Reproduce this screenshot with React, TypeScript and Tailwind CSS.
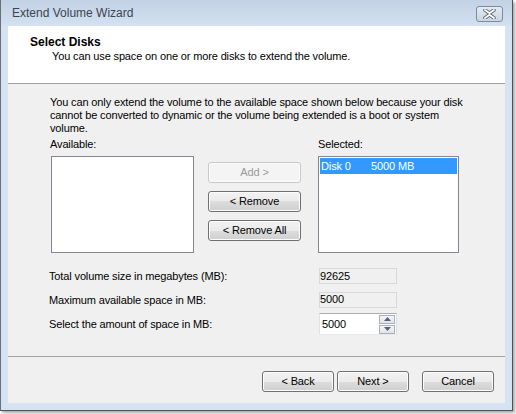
import * as React from "react";

const font = { fontFamily: '"Liberation Sans", Arial, sans-serif' };

// Vista-style push button
const WinButton: React.FC<{ label: string; disabled?: boolean; className?: string }> = ({
  label,
  disabled,
  className = "",
}) => (
  <button
    type="button"
    disabled={disabled}
    className={
      "h-[21px] rounded-[3px] border text-[11px] leading-none tracking-[-0.12px] shadow-[inset_0_0_0_1px_#fcfcfc] " +
      (disabled
        ? "border-[#c5c9cc] bg-[#f4f4f4] text-[#9a9a9a] "
        : "border-[#707070] bg-[linear-gradient(#f2f2f2_0%,#ebebeb_50%,#dddddd_50%,#cfcfcf_100%)] text-black ") +
      className
    }
  >
    {label}
  </button>
);

const ReadOnlyBox: React.FC<{ value: string }> = ({ value }) => (
  <div className="flex h-[16px] w-[78px] items-center border border-[#d9d9d9] bg-[#f0f0f0] text-[11px] leading-none text-black">
    {value}
  </div>
);

const Spinner: React.FC<{ value: string }> = ({ value }) => (
  <div className="flex h-[22px] w-[78px] items-center justify-between border border-[#abadb3] border-b-[#e3e9ef] border-l-[#e2e3ea] border-r-[#dbdfe6] bg-white pl-[2px] pr-[1px]">
    <span className="text-[11px] leading-none text-black">{value}</span>
    <div className="flex flex-col gap-[1px]">
      <div className="flex h-[9px] w-[16px] items-center justify-center border border-[#a9b0b8] bg-[linear-gradient(#f6f6f6,#e3e3e3)]">
        <svg width="7" height="4" viewBox="0 0 7 4">
          <path d="M0 4 L3.5 0 L7 4 Z" fill="#4d6185" />
        </svg>
      </div>
      <div className="flex h-[9px] w-[16px] items-center justify-center border border-[#a9b0b8] bg-[linear-gradient(#f6f6f6,#e3e3e3)]">
        <svg width="7" height="4" viewBox="0 0 7 4">
          <path d="M0 0 L7 0 L3.5 4 Z" fill="#4d6185" />
        </svg>
      </div>
    </div>
  </div>
);

export default function App() {
  return (
    <div className="h-[414px] w-[516px] bg-white" style={font}>
      <div className="flex h-[411px] w-[513px] flex-col border-x border-b border-[#4e5258] border-l-[#6b7078] bg-[#d5e3f3] shadow-[2px_2px_3px_rgba(0,0,0,0.35)]">
        {/* title bar */}
        <div className="flex h-[26px] shrink-0 items-center justify-between bg-[linear-gradient(#c2d2e4,#d3e1f1)] pl-[11px] pr-[9px]">
          <span className="text-[12px] text-[#3d4450]">Extend Volume Wizard</span>
          <div className="mt-[2px] flex h-[16px] w-[27px] items-center justify-center rounded-[3px] border border-[#7d8a99] bg-[linear-gradient(#e4ebf3,#c9d5e2)]">
            <svg width="13" height="10" viewBox="0 0 13 10">
              <path
                d="M2 1 L6.5 4.2 L11 1 M2 9 L6.5 5.8 L11 9"
                stroke="#5f6773"
                strokeWidth="3.6"
                strokeLinecap="round"
                fill="none"
              />
              <path
                d="M2 1 L6.5 4.2 L11 1 M2 9 L6.5 5.8 L11 9"
                stroke="#ffffff"
                strokeWidth="1.8"
                strokeLinecap="round"
                fill="none"
              />
            </svg>
          </div>
        </div>

        {/* client area */}
        <div className="mx-[7px] flex h-[377px] shrink-0 flex-col bg-[#f0f0f0] text-black">
          <div className="h-[58px] shrink-0 border-b border-[#a0a0a0] bg-white pl-[22px] pt-[9px]">
            <div className="text-[12px] font-bold leading-[14px]">Select Disks</div>
            <div className="mt-[1px] pl-[22px] text-[11px] leading-[13px] tracking-[-0.14px]">
              You can use space on one or more disks to extend the volume.
            </div>
          </div>

          <div className="flex h-[272px] shrink-0 flex-col pl-[42px] pt-[12px] text-[11px] tracking-[-0.13px]">
            <p className="whitespace-nowrap leading-[13px]">
              You can only extend the volume to the available space shown below because your disk
              <br />
              cannot be converted to dynamic or the volume being extended is a boot or system
              <br />
              volume.
            </p>

            <div className="mt-[3px] grid grid-cols-[144px_93px_144px] gap-x-[14px]">
              <div className="leading-[13px]">Available:</div>
              <div />
              <div className="ml-[3px] leading-[13px]">Selected:</div>

              <div className="ml-[1px] mt-[5px] h-[97px] border border-[#828790] bg-white" />
              <div className="mt-[11px] flex flex-col gap-[8px]">
                <WinButton label="Add >" disabled />
                <WinButton label="< Remove" />
                <WinButton label="< Remove All" />
              </div>
              <div className="ml-[3px] mt-[5px] h-[97px] border border-[#828790] bg-white p-[1px]">
                <div className="flex h-[16px] items-center bg-[#3399ff] pl-[1px] leading-none text-white">
                  <span className="w-[50px]">Disk 0</span>
                  <span>5000 MB</span>
                </div>
              </div>
            </div>

            <div className="ml-[-1px] mt-[15px] grid grid-cols-[270px_78px] items-center gap-y-[7px]">
              <span>Total volume size in megabytes (MB):</span>
              <ReadOnlyBox value="92625" />
              <span>Maximum available space in MB:</span>
              <ReadOnlyBox value="5000" />
              <span className="mt-[-2px]">Select the amount of space in MB:</span>
              <div className="mt-[-2px]">
                <Spinner value="5000" />
              </div>
            </div>
          </div>

          <div className="flex flex-1 items-start justify-end border-t border-[#a0a0a0] pr-[11px] pt-[14px]">
            <WinButton label="< Back" className="w-[72px]" />
            <WinButton label="Next >" className="ml-[3px] w-[72px]" />
            <WinButton label="Cancel" className="ml-[13px] w-[72px]" />
          </div>
        </div>
      </div>
    </div>
  );
}
